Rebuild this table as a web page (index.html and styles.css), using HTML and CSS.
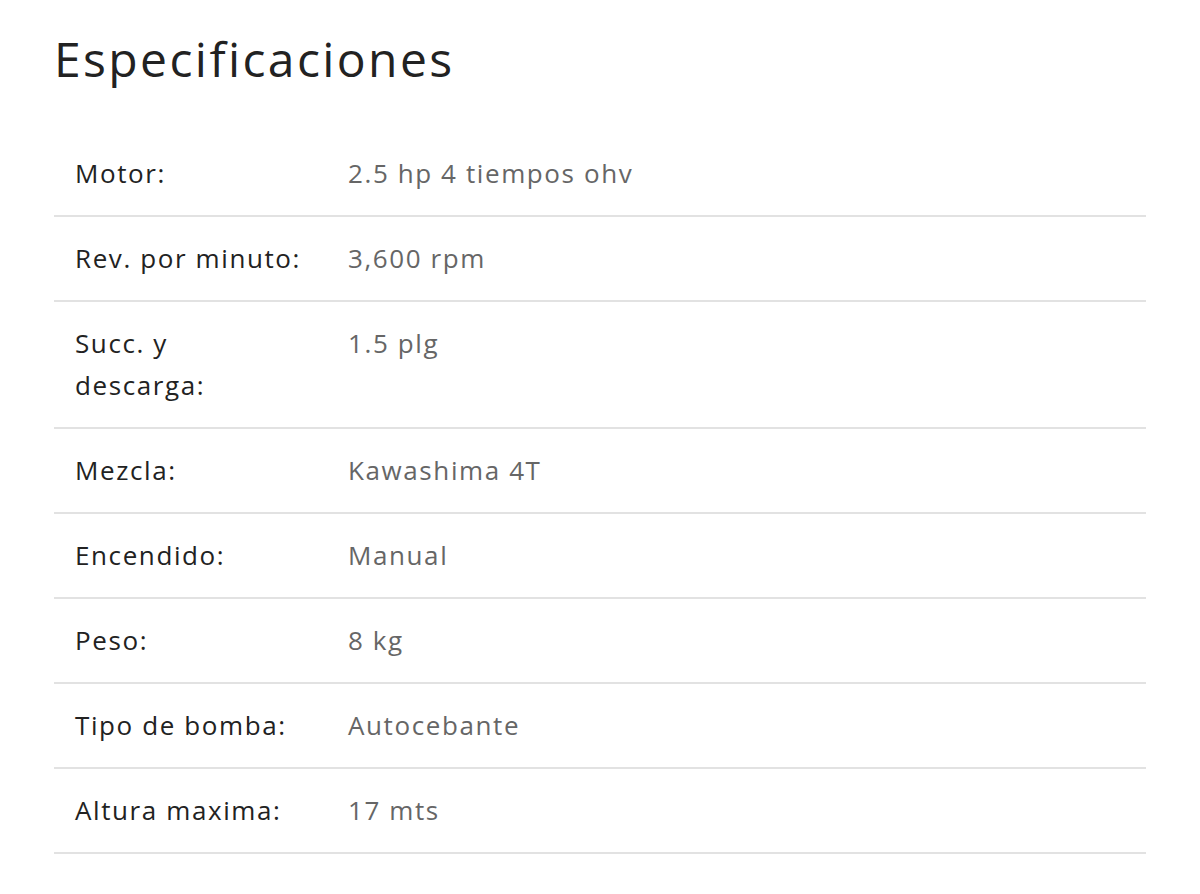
FILE: index.html
```html
<!DOCTYPE html>
<html lang="es">
<head>
<meta charset="utf-8">
<title>Especificaciones</title>
<link rel="stylesheet" href="styles.css">
</head>
<body>
<section class="specs">
  <h1 class="specs-title">Especificaciones</h1>
  <table class="specs-table">
    <colgroup>
      <col class="col-label">
      <col class="col-value">
    </colgroup>
    <tbody>
      <tr><th>Motor:</th><td>2.5 hp 4 tiempos ohv</td></tr>
      <tr><th>Rev. por minuto:</th><td>3,600 rpm</td></tr>
      <tr><th>Succ. y descarga:</th><td>1.5 plg</td></tr>
      <tr><th>Mezcla:</th><td>Kawashima 4T</td></tr>
      <tr><th>Encendido:</th><td>Manual</td></tr>
      <tr><th>Peso:</th><td>8 kg</td></tr>
      <tr><th>Tipo de bomba:</th><td>Autocebante</td></tr>
      <tr><th>Altura maxima:</th><td>17 mts</td></tr>
    </tbody>
  </table>
</section>
</body>
</html>
```

FILE: styles.css
```css
html, body {
  margin: 0;
  padding: 0;
  background: #ffffff;
}

body {
  font-family: "Open Sans", "DejaVu Sans", sans-serif;
}

.specs {
  width: 1092px;
  padding: 0 0 0 54px;
}

.specs-title {
  margin: 0;
  padding-top: 27px;
  height: 132px;
  box-sizing: border-box;
  font-size: 48px;
  line-height: 64px;
  font-weight: 400;
  letter-spacing: 2.4px;
  color: #222222;
}

.specs-table {
  width: 100%;
  table-layout: fixed;
  border-collapse: collapse;
  margin: 0;
}

.col-label {
  width: 294px;
}

.specs-table th,
.specs-table td {
  padding: 20px 21px 21px 21px;
  font-size: 26px;
  line-height: 42px;
  font-weight: 400;
  letter-spacing: 1.6px;
  text-align: left;
  vertical-align: top;
  border-bottom: 2px solid #e2e2e2;
}

.specs-table th {
  color: #222222;
  padding-right: 45px;
}

.specs-table td {
  padding-left: 0;
  color: #666666;
}
```
